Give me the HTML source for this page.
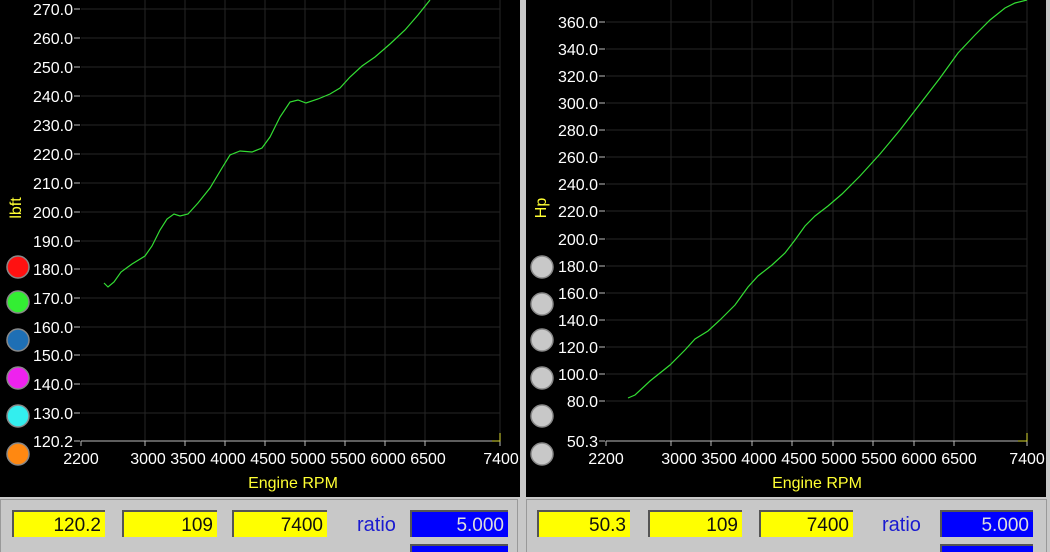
<!DOCTYPE html>
<html style="overflow:hidden;width:1050px;height:552px"><head><meta charset="utf-8"><style>
body{margin:0;width:1050px;height:552px;overflow:hidden;background:#c8c8c8;font-family:"Liberation Sans",Arial,sans-serif;position:relative}
.bx{position:absolute;height:27px;font-size:19px;text-align:right;box-sizing:border-box;padding-right:4px;line-height:27px;border-top:2px solid #555;border-left:2px solid #555}
.y{background:#ffff00;color:#111}
.b{background:#0000ff;color:#ddd}
.r{position:absolute;color:#1a1ad0;font-size:20px}
.pn{position:absolute;top:499px;height:53px;border:1px solid #999;border-bottom:none;background:#c8c8c8}
</style></head><body>
<svg width="1050" height="500" style="position:absolute;left:0;top:0" font-family="Liberation Sans,Arial,sans-serif" font-size="16">
<rect x="0" y="0" width="520" height="497" fill="#000"/>
<rect x="526" y="0" width="520" height="497" fill="#000"/>
<rect x="520" y="0" width="6" height="500" fill="#c8c8c8"/>
<rect x="1046" y="0" width="4" height="500" fill="#c8c8c8"/>
<g stroke="#262626" stroke-width="1">
<line x1="81" y1="9" x2="500" y2="9"/><line x1="81" y1="38" x2="500" y2="38"/><line x1="81" y1="67" x2="500" y2="67"/><line x1="81" y1="96" x2="500" y2="96"/><line x1="81" y1="125" x2="500" y2="125"/><line x1="81" y1="154" x2="500" y2="154"/><line x1="81" y1="183" x2="500" y2="183"/><line x1="81" y1="212" x2="500" y2="212"/><line x1="81" y1="241" x2="500" y2="241"/><line x1="81" y1="269" x2="500" y2="269"/><line x1="81" y1="298" x2="500" y2="298"/><line x1="81" y1="327" x2="500" y2="327"/><line x1="81" y1="355" x2="500" y2="355"/><line x1="81" y1="384" x2="500" y2="384"/><line x1="81" y1="413" x2="500" y2="413"/>
<line x1="145" y1="0" x2="145" y2="441"/><line x1="185" y1="0" x2="185" y2="441"/><line x1="225" y1="0" x2="225" y2="441"/><line x1="265" y1="0" x2="265" y2="441"/><line x1="305" y1="0" x2="305" y2="441"/><line x1="345" y1="0" x2="345" y2="441"/><line x1="385" y1="0" x2="385" y2="441"/><line x1="425" y1="0" x2="425" y2="441"/><line x1="500" y1="0" x2="500" y2="441"/>
<line x1="606" y1="22" x2="1027" y2="22"/><line x1="606" y1="49" x2="1027" y2="49"/><line x1="606" y1="76" x2="1027" y2="76"/><line x1="606" y1="103" x2="1027" y2="103"/><line x1="606" y1="130" x2="1027" y2="130"/><line x1="606" y1="157" x2="1027" y2="157"/><line x1="606" y1="184" x2="1027" y2="184"/><line x1="606" y1="211" x2="1027" y2="211"/><line x1="606" y1="239" x2="1027" y2="239"/><line x1="606" y1="266" x2="1027" y2="266"/><line x1="606" y1="293" x2="1027" y2="293"/><line x1="606" y1="320" x2="1027" y2="320"/><line x1="606" y1="347" x2="1027" y2="347"/><line x1="606" y1="374" x2="1027" y2="374"/><line x1="606" y1="401" x2="1027" y2="401"/>
<line x1="671" y1="0" x2="671" y2="441"/><line x1="711" y1="0" x2="711" y2="441"/><line x1="752" y1="0" x2="752" y2="441"/><line x1="792" y1="0" x2="792" y2="441"/><line x1="833" y1="0" x2="833" y2="441"/><line x1="873" y1="0" x2="873" y2="441"/><line x1="914" y1="0" x2="914" y2="441"/><line x1="954" y1="0" x2="954" y2="441"/><line x1="1027" y1="0" x2="1027" y2="441"/>
</g>
<g stroke="#bbb"><line x1="81" y1="441" x2="500" y2="441"/><line x1="606" y1="441" x2="1027" y2="441"/>
<path d="M74,9h6M74,38h6M74,67h6M74,96h6M74,125h6M74,154h6M74,183h6M74,212h6M74,241h6M74,269h6M74,298h6M74,327h6M74,355h6M74,384h6M74,413h6M74,441h6M81,441v5M145,441v5M185,441v5M225,441v5M265,441v5M305,441v5M345,441v5M385,441v5M425,441v5M500,441v5"/>
<path d="M599,22h6M599,49h6M599,76h6M599,103h6M599,130h6M599,157h6M599,184h6M599,211h6M599,239h6M599,266h6M599,293h6M599,320h6M599,347h6M599,374h6M599,401h6M599,441h6M606,441v5M671,441v5M711,441v5M752,441v5M792,441v5M833,441v5M873,441v5M914,441v5M954,441v5M1027,441v5"/>
</g>
<g fill="#fff" text-anchor="end">
<text x="73" y="15">270.0</text><text x="73" y="44">260.0</text><text x="73" y="73">250.0</text><text x="73" y="102">240.0</text><text x="73" y="131">230.0</text><text x="73" y="160">220.0</text><text x="73" y="189">210.0</text><text x="73" y="218">200.0</text><text x="73" y="247">190.0</text><text x="73" y="275">180.0</text><text x="73" y="304">170.0</text><text x="73" y="333">160.0</text><text x="73" y="361">150.0</text><text x="73" y="390">140.0</text><text x="73" y="419">130.0</text><text x="73" y="447">120.2</text>
<text x="598" y="28">360.0</text><text x="598" y="55">340.0</text><text x="598" y="82">320.0</text><text x="598" y="109">300.0</text><text x="598" y="136">280.0</text><text x="598" y="163">260.0</text><text x="598" y="190">240.0</text><text x="598" y="217">220.0</text><text x="598" y="245">200.0</text><text x="598" y="272">180.0</text><text x="598" y="299">160.0</text><text x="598" y="326">140.0</text><text x="598" y="353">120.0</text><text x="598" y="380">100.0</text><text x="598" y="407">80.0</text><text x="598" y="447">50.3</text>
</g>
<g fill="#fff" text-anchor="middle">
<text x="81" y="464">2200</text><text x="148" y="464">3000</text><text x="188" y="464">3500</text><text x="228" y="464">4000</text><text x="268" y="464">4500</text><text x="308" y="464">5000</text><text x="348" y="464">5500</text><text x="388" y="464">6000</text><text x="428" y="464">6500</text><text x="501" y="464">7400</text>
<text x="606" y="464">2200</text><text x="679" y="464">3000</text><text x="719" y="464">3500</text><text x="759" y="464">4000</text><text x="799" y="464">4500</text><text x="839" y="464">5000</text><text x="879" y="464">5500</text><text x="919" y="464">6000</text><text x="959" y="464">6500</text><text x="1027" y="464">7400</text>
</g>
<g fill="#ffff33" text-anchor="middle">
<text x="293" y="488">Engine RPM</text><text x="817" y="488">Engine RPM</text>
<text transform="translate(21,208) rotate(-90)">lbft</text>
<text transform="translate(546,208) rotate(-90)">Hp</text>
</g>
<path d="M104,283 L108,287 L114,282 L121,272 L132,264 L145,256 L152,246 L160,230 L167,219 L174,214 L180,216 L188,214 L198,203 L210,188 L222,168 L230,155 L240,151 L252,152 L262,148 L270,137 L280,117 L290,102 L298,100 L306,103 L318,99 L330,94 L340,88 L350,77 L362,66 L375,57 L390,44 L405,30 L418,15 L430,0" fill="none" stroke="#33dd33" stroke-width="1.2"/>
<path d="M628,398 L635,395 L650,381 L670,365 L685,350 L695,339 L708,331 L720,320 L735,305 L748,287 L758,276 L772,265 L785,253 L795,240 L805,226 L815,216 L828,206 L842,194 L860,176 L880,154 L900,130 L920,104 L940,78 L958,53 L975,35 L990,20 L1005,8 L1015,3 L1027,0" fill="none" stroke="#33dd33" stroke-width="1.2"/>
<path d="M1018,441h9v-8" stroke="#dddd33" fill="none"/><path d="M492,441h8v-8" stroke="#dddd33" fill="none"/>
<g stroke="#888" stroke-width="1.5">
<circle cx="18" cy="267" r="11" fill="#ff1111"/><circle cx="18" cy="302" r="11" fill="#33ee33"/><circle cx="18" cy="340" r="11" fill="#1e6fb5"/><circle cx="18" cy="378" r="11" fill="#ee22ee"/><circle cx="18" cy="416" r="11" fill="#33eeee"/><circle cx="18" cy="454" r="11" fill="#ff8811"/>
<g fill="#c8c8c8"><circle cx="542" cy="267" r="11"/><circle cx="542" cy="304" r="11"/><circle cx="542" cy="340" r="11"/><circle cx="542" cy="378" r="11"/><circle cx="542" cy="416" r="11"/><circle cx="542" cy="454" r="11"/></g>
</g>
</svg>
<div class="pn" style="left:0;width:516px"></div>
<div class="pn" style="left:526px;width:519px"></div>
<div class="bx y" style="left:12px;top:510px;width:93px">120.2</div>
<div class="bx y" style="left:122px;top:510px;width:95px">109</div>
<div class="bx y" style="left:232px;top:510px;width:95px">7400</div>
<div class="r" style="left:357px;top:514px">ratio</div>
<div class="bx b" style="left:410px;top:510px;width:98px">5.000</div>
<div class="bx b" style="left:410px;top:544px;width:98px;height:8px"></div>
<div class="bx y" style="left:537px;top:510px;width:93px">50.3</div>
<div class="bx y" style="left:648px;top:510px;width:94px">109</div>
<div class="bx y" style="left:759px;top:510px;width:94px">7400</div>
<div class="r" style="left:882px;top:514px">ratio</div>
<div class="bx b" style="left:940px;top:510px;width:93px">5.000</div>
<div class="bx b" style="left:940px;top:544px;width:93px;height:8px"></div>
</body></html>
